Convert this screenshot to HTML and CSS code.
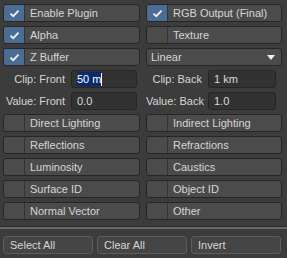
FILE: index.html
```html
<!DOCTYPE html>
<html lang="en">
<head>
    <meta charset="UTF-8">
    <title>Buffer Export</title>
    <link rel="stylesheet" href="styles.css">
</head>
<body>
    <div class="panel">
        <div class="grid">
            <div class="toggle on"><span class="check"><svg viewBox="0 0 12 10"><path d="M1.5 5.2 L4.6 8 L10.5 1.8"/></svg></span><span class="label">Enable Plugin</span></div>
            <div class="toggle on"><span class="check"><svg viewBox="0 0 12 10"><path d="M1.5 5.2 L4.6 8 L10.5 1.8"/></svg></span><span class="label">RGB Output (Final)</span></div>
            <div class="toggle on"><span class="check"><svg viewBox="0 0 12 10"><path d="M1.5 5.2 L4.6 8 L10.5 1.8"/></svg></span><span class="label">Alpha</span></div>
            <div class="toggle"><span class="check"></span><span class="label">Texture</span></div>
            <div class="toggle on"><span class="check"><svg viewBox="0 0 12 10"><path d="M1.5 5.2 L4.6 8 L10.5 1.8"/></svg></span><span class="label">Z Buffer</span></div>
            <div class="select"><span class="label">Linear</span><span class="arrow"></span></div>

            <div class="field left"><span class="flabel">Clip: Front</span><span class="input"><span class="sel">50 m</span><span class="caret"></span></span></div>
            <div class="field right"><span class="flabel">Clip: Back</span><span class="input">1 km</span></div>
            <div class="field left"><span class="flabel">Value: Front</span><span class="input">0.0</span></div>
            <div class="field right"><span class="flabel">Value: Back</span><span class="input">1.0</span></div>

            <div class="toggle"><span class="check"></span><span class="label">Direct Lighting</span></div>
            <div class="toggle"><span class="check"></span><span class="label">Indirect Lighting</span></div>
            <div class="toggle"><span class="check"></span><span class="label">Reflections</span></div>
            <div class="toggle"><span class="check"></span><span class="label">Refractions</span></div>
            <div class="toggle"><span class="check"></span><span class="label">Luminosity</span></div>
            <div class="toggle"><span class="check"></span><span class="label">Caustics</span></div>
            <div class="toggle"><span class="check"></span><span class="label">Surface ID</span></div>
            <div class="toggle"><span class="check"></span><span class="label">Object ID</span></div>
            <div class="toggle"><span class="check"></span><span class="label">Normal Vector</span></div>
            <div class="toggle"><span class="check"></span><span class="label">Other</span></div>
        </div>
        <div class="separator"></div>
        <div class="actions">
            <button class="btn">Select All</button>
            <button class="btn">Clear All</button>
            <button class="btn">Invert</button>
        </div>
    </div>
</body>
</html>
```

FILE: styles.css
```css
body{
    margin: 0;
    background-color: #3c3c3c;
    font-family: 'Liberation Sans', Arial, sans-serif;
    font-size: 11px;
    color: #d6d6d6;
}
.panel{
    width: 287px;
    height: 258px;
    overflow: hidden;
}
.grid{
    display: grid;
    grid-template-columns: 137px 136px;
    column-gap: 6px;
    row-gap: 4px;
    padding: 4px 0 0 3px;
}
.toggle, .select{
    height: 18px;
    box-sizing: border-box;
    border: 1px solid #262626;
    border-radius: 3px;
    background: #4b4b4b;
    display: flex;
    align-items: center;
    overflow: hidden;
}
.toggle .check{
    width: 20px;
    height: 100%;
    flex: none;
    border-right: 1px solid #333333;
    display: flex;
    align-items: center;
    justify-content: center;
}
.toggle.on .check{
    background: #4a6c95;
}
.toggle .check svg{
    width: 11px;
    height: 9px;
    fill: none;
    stroke: #f0f0f0;
    stroke-width: 2;
}
.toggle .label{
    padding-left: 5px;
    white-space: nowrap;
}
.select{
    justify-content: space-between;
    padding: 0 6px 0 4px;
}
.select .arrow{
    width: 0;
    height: 0;
    border-left: 4px solid transparent;
    border-right: 4px solid transparent;
    border-top: 5px solid #eeeeee;
}
.field{
    height: 18px;
    display: flex;
    align-items: center;
    gap: 6px;
}
.field .flabel{
    text-align: right;
    white-space: nowrap;
}
.field.left .flabel{ width: 62px; }
.field.left .input{ width: 66px; }
.field.right .flabel{ width: 56px; }
.field.right .input{ width: 68px; }
.field .input{
    height: 18px;
    box-sizing: border-box;
    border: 1px solid #262626;
    border-radius: 3px;
    background: #323232;
    padding-left: 5px;
    display: flex;
    align-items: center;
    color: #dcdcdc;
}
.field .sel{
    background: #0c2a6e;
    color: #ffffff;
    line-height: 14px;
}
.field .caret{
    width: 1px;
    height: 13px;
    background: #ffffff;
}
.separator{
    margin-top: 6px;
    height: 1px;
    background: #2a2a2a;
    border-bottom: 2px solid #6a6a6a;
}
.actions{
    display: flex;
    gap: 4px;
    padding: 7px 0 0 3px;
}
.btn{
    width: 90px;
    height: 18px;
    box-sizing: border-box;
    border: 1px solid #5c5c5c;
    border-radius: 3px;
    background: #454545;
    color: #d6d6d6;
    font-family: inherit;
    font-size: 11px;
    text-align: left;
    padding: 0 0 0 6px;
}
```
